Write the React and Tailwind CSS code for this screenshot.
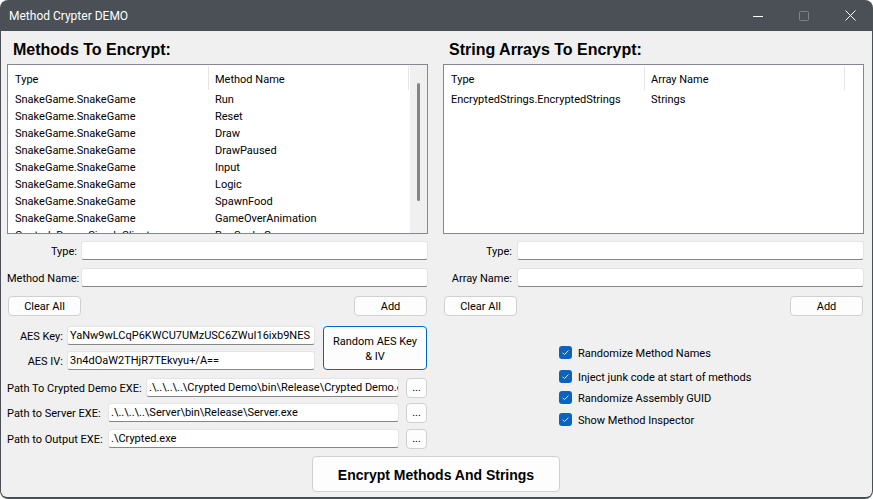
import React from "react";

function TB({ value = "", className = "" }) {
  return (
    <div
      className={
        "h-[19px] bg-white border border-[#e4e4e4] border-b-[#868686] rounded-[3px] flex items-center pl-[2px] pt-[2px] overflow-hidden whitespace-nowrap text-[11px] text-black " +
        className
      }
    >
      {value}
    </div>
  );
}

function Btn({ children, className = "" }) {
  return (
    <div
      className={
        "bg-[#fdfdfd] border border-[#d0d0d0] rounded-[4px] flex items-center justify-center pt-[2px] text-[11px] text-black " +
        className
      }
    >
      {children}
    </div>
  );
}

function Check({ label, className = "" }) {
  return (
    <div className={"flex items-center h-[13px] " + className}>
      <div className="w-[13px] h-[13px] rounded-[3px] bg-[#0b63c1] flex items-center justify-center shrink-0">
        <svg width="13" height="13" viewBox="0 0 13 13">
          <path d="M3.6 6.7 L5.5 8.6 L9.4 4.6" stroke="#d8e8f8" strokeWidth="1" fill="none" />
        </svg>
      </div>
      <span className="ml-[6px] pt-[3px] text-[11px] text-black whitespace-nowrap">{label}</span>
    </div>
  );
}

const methods = [
  ["SnakeGame.SnakeGame", "Run"],
  ["SnakeGame.SnakeGame", "Reset"],
  ["SnakeGame.SnakeGame", "Draw"],
  ["SnakeGame.SnakeGame", "DrawPaused"],
  ["SnakeGame.SnakeGame", "Input"],
  ["SnakeGame.SnakeGame", "Logic"],
  ["SnakeGame.SnakeGame", "SpawnFood"],
  ["SnakeGame.SnakeGame", "GameOverAnimation"],
  ["ControlsDemo.SimpleClient", "RunSnakeGame"],
];

function Header({ col2 }) {
  return (
    <div className="h-[25px] flex shrink-0">
      <div className="w-[200px] pl-[7px] pt-[5px] flex items-center">Type</div>
      <div className="w-px bg-[#e5e5e5] h-[24px] mt-px" />
      <div className="w-[199px] pl-[6px] pt-[5px] flex items-center">{col2}</div>
      <div className="w-px bg-[#e5e5e5] h-[24px] mt-px" />
    </div>
  );
}

function Row({ a, b }) {
  return (
    <div className="h-[17px] flex items-center pt-[4px] shrink-0 whitespace-nowrap">
      <div className="w-[207px] pl-[7px]">{a}</div>
      <div>{b}</div>
    </div>
  );
}

function Label({ children, className = "" }) {
  return <div className={"pt-[4px] whitespace-nowrap " + className}>{children}</div>;
}

export default function App() {
  return (
    <div className="w-[873px] h-[499px] rounded-[8px] bg-[#4a5055] overflow-hidden flex flex-col font-[Roboto,sans-serif] text-[11px] text-black">
      {/* title bar */}
      <div className="h-[31px] flex items-center shrink-0">
        <div className="pl-[9px] text-white text-[12px]">Method Crypter DEMO</div>
        <div className="ml-auto flex h-full">
          <div className="w-[46px] flex items-center justify-center">
            <svg width="10" height="10" viewBox="0 0 10 10">
              <path d="M0 5.5 H10" stroke="#ffffff" strokeWidth="1" />
            </svg>
          </div>
          <div className="w-[46px] flex items-center justify-center">
            <svg width="10" height="10" viewBox="0 0 10 10">
              <rect x="0.5" y="0.5" width="9" height="9" rx="1" stroke="#7d8388" strokeWidth="1" fill="none" />
            </svg>
          </div>
          <div className="w-[46px] flex items-center justify-center">
            <svg width="11" height="11" viewBox="0 0 11 11">
              <path d="M0.5 0.5 L10.5 10.5 M10.5 0.5 L0.5 10.5" stroke="#ffffff" strokeWidth="1" />
            </svg>
          </div>
        </div>
      </div>

      {/* body */}
      <div className="flex-1 mx-[1px] mb-[2px] bg-[#f0f0f0] rounded-b-[6px] pl-[6px] pr-[8px] pt-[10px] flex flex-col">
        <div className="flex">
          {/* left column */}
          <div className="w-[421px] flex flex-col">
            <div className="h-[18px] leading-[18px] text-[16px] font-bold pl-[6px] font-['Liberation_Sans',Arial,sans-serif]">
              Methods To Encrypt:
            </div>
            <div className="mt-[5px] h-[170px] border border-[#828790] bg-white flex overflow-hidden">
              <div className="flex-1 flex flex-col overflow-hidden">
                <Header col2="Method Name" />
                {methods.map((m, i) => (
                  <Row key={i} a={m[0]} b={m[1]} />
                ))}
              </div>
              <div className="w-[17px] bg-[#f0f0f0] shrink-0">
                <div className="ml-[7px] mt-[18px] w-[3px] h-[118px] rounded-full bg-[#858585]" />
              </div>
            </div>
            <div className="mt-[7px] flex items-center h-[19px]">
              <Label className="w-[70px] text-right">Type:</Label>
              <TB className="ml-[4px] flex-1" />
            </div>
            <div className="mt-[8px] flex items-center h-[19px]">
              <Label className="w-[70px] text-right">Method Name:</Label>
              <TB className="ml-[4px] flex-1" />
            </div>
            <div className="mt-[9px] flex justify-between px-[1px]">
              <Btn className="w-[73px] h-[20px]">Clear All</Btn>
              <Btn className="w-[73px] h-[20px]">Add</Btn>
            </div>
          </div>

          {/* right column */}
          <div className="w-[421px] ml-[15px] flex flex-col">
            <div className="h-[18px] leading-[18px] text-[16px] font-bold pl-[6px] font-['Liberation_Sans',Arial,sans-serif]">
              String Arrays To Encrypt:
            </div>
            <div className="mt-[5px] h-[170px] border border-[#828790] bg-white flex flex-col overflow-hidden">
              <Header col2="Array Name" />
              <Row a="EncryptedStrings.EncryptedStrings" b="Strings" />
            </div>
            <div className="mt-[7px] flex items-center h-[19px]">
              <Label className="w-[69px] text-right">Type:</Label>
              <TB className="ml-[5px] flex-1" />
            </div>
            <div className="mt-[8px] flex items-center h-[19px]">
              <Label className="w-[69px] text-right">Array Name:</Label>
              <TB className="ml-[5px] flex-1" />
            </div>
            <div className="mt-[9px] flex justify-between px-[1px]">
              <Btn className="w-[73px] h-[20px]">Clear All</Btn>
              <Btn className="w-[73px] h-[20px]">Add</Btn>
            </div>
          </div>
        </div>

        {/* bottom section */}
        <div className="mt-[10px] flex">
          <div className="w-[421px] flex flex-col">
            <div className="flex">
              <div className="w-[308px] flex flex-col">
                <div className="flex items-center h-[19px]">
                  <Label className="w-[56px] text-right">AES Key:</Label>
                  <TB className="ml-[4px] flex-1" value="YaNw9wLCqP6KWCU7UMzUSC6ZWuI16ixb9NES" />
                </div>
                <div className="mt-[6px] flex items-center h-[19px]">
                  <Label className="w-[56px] text-right">AES IV:</Label>
                  <TB className="ml-[4px] flex-1" value="3n4dOaW2THjR7TEkvyu+/A==" />
                </div>
              </div>
              <div className="ml-[8px] w-[104px] h-[44px] border border-[#0067c0] rounded-[4px] bg-[#fdfdfd] flex items-center justify-center pt-[2px] text-center leading-[15px] text-[11px]">
                Random AES Key
                <br />
                &amp; IV
              </div>
            </div>
            <div className="mt-[8px] flex items-center h-[19px] pr-[1px]">
              <Label className="w-[139px]">Path To Crypted Demo EXE:</Label>
              <TB className="flex-1" value=".\..\..\..\Crypted Demo\bin\Release\Crypted Demo.exe" />
              <Btn className="ml-[7px] w-[21px] h-[20px] text-[10px]">...</Btn>
            </div>
            <div className="mt-[6px] flex items-center h-[19px] pr-[1px]">
              <Label className="w-[101px]">Path to Server EXE:</Label>
              <TB className="flex-1" value=".\..\..\..\Server\bin\Release\Server.exe" />
              <Btn className="ml-[7px] w-[21px] h-[20px] text-[10px]">...</Btn>
            </div>
            <div className="mt-[7px] flex items-center h-[19px] pr-[1px]">
              <Label className="w-[101px]">Path to Output EXE:</Label>
              <TB className="flex-1" value=".\Crypted.exe" />
              <Btn className="ml-[7px] w-[21px] h-[20px] text-[10px]">...</Btn>
            </div>
          </div>

          <div className="w-[421px] ml-[15px] pl-[116px] flex flex-col">
            <Check className="mt-[20px]" label="Randomize Method Names" />
            <Check className="mt-[11px]" label="Inject junk code at start of methods" />
            <Check className="mt-[8px]" label="Randomize Assembly GUID" />
            <Check className="mt-[9px]" label="Show Method Inspector" />
          </div>
        </div>

        <div className="mt-[8px] flex justify-center">
          <Btn className="w-[248px] h-[36px] ml-[1px] text-[14px] font-bold font-['Liberation_Sans',Arial,sans-serif]">
            Encrypt Methods And Strings
          </Btn>
        </div>
      </div>
    </div>
  );
}
